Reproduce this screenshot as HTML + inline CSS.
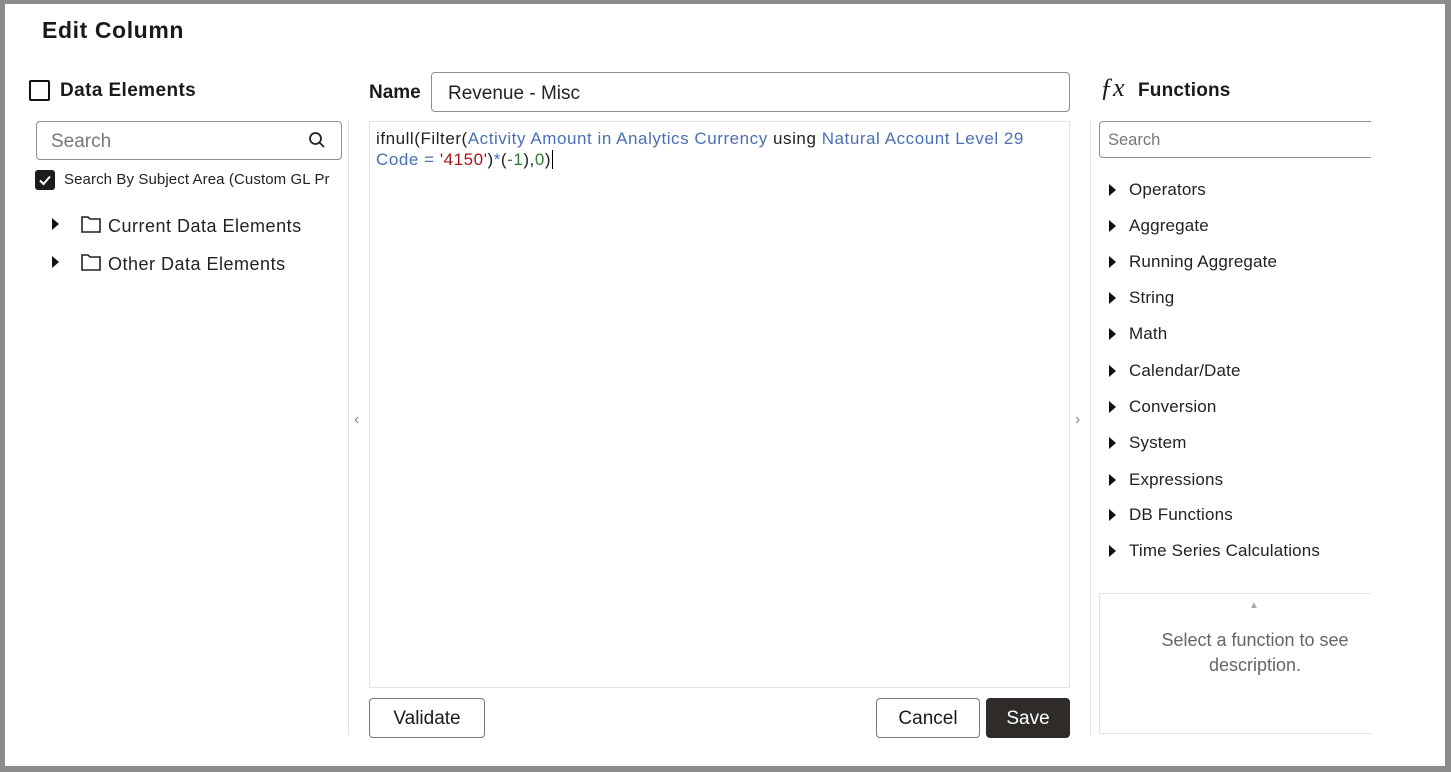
<!DOCTYPE html>
<html><head><meta charset="utf-8"><style>
*{box-sizing:border-box;margin:0;padding:0}
body{width:1451px;height:772px;background:#8c8c8c;font-family:"Liberation Sans",sans-serif;color:#1a1a1a;position:relative;overflow:hidden}
#p{position:absolute;left:5px;top:4px;width:1440px;height:762px;background:#fff}
.a{position:absolute;white-space:nowrap}
.box{position:absolute;border:1px solid #8f8f8f;border-radius:4px;background:#fff}
.tri{position:absolute;width:0;height:0;border-top:6px solid transparent;border-bottom:6px solid transparent;border-left:7px solid #111}
.fl{font-size:17px;color:#222;letter-spacing:.55px}
.btn{position:absolute;border:1px solid #777;border-radius:4px;background:#fff;font-size:19px;display:flex;align-items:center;justify-content:center;padding-top:2px}
</style></head><body><div id="p"></div>
<div class="a" style="left:42px;top:17px;font-size:23px;font-weight:bold;letter-spacing:.6px">Edit Column</div>

<div class="a" style="left:29px;top:80px;width:21px;height:21px;border:2px solid #111;border-radius:2px"></div>
<div class="a" style="left:60px;top:80px;font-size:19px;font-weight:bold;letter-spacing:.4px">Data Elements</div>
<div class="box" style="left:36px;top:121px;width:306px;height:39px"></div>
<div class="a" style="left:51px;top:131px;font-size:19px;color:#777">Search</div>
<svg class="a" style="left:307px;top:130px" width="20" height="20" viewBox="0 0 20 20"><circle cx="8.5" cy="8.5" r="5.5" fill="none" stroke="#222" stroke-width="1.8"/><path d="M12.5 12.5L17 17" stroke="#222" stroke-width="1.8"/></svg>
<svg class="a" style="left:35px;top:170px" width="20" height="20" viewBox="0 0 20 20"><rect width="20" height="20" rx="3" fill="#1c1c1c"/><path d="M5 10.5l3.5 3.5L15 6.5" fill="none" stroke="#fff" stroke-width="2"/></svg>
<div class="a" style="left:64px;top:171px;font-size:15px;color:#222;letter-spacing:.1px">Search By Subject Area (Custom GL Pr</div>
<div class="tri" style="left:52px;top:218px"></div>
<svg class="a" style="left:81px;top:215px" width="20" height="18" viewBox="0 0 20 18"><path d="M1 2h6l2 2h10v13H1z" fill="none" stroke="#222" stroke-width="1.6"/></svg>
<div class="a" style="left:108px;top:216px;font-size:18px;color:#222;letter-spacing:.5px">Current Data Elements</div>
<div class="tri" style="left:52px;top:256px"></div>
<svg class="a" style="left:81px;top:253px" width="20" height="18" viewBox="0 0 20 18"><path d="M1 2h6l2 2h10v13H1z" fill="none" stroke="#222" stroke-width="1.6"/></svg>
<div class="a" style="left:108px;top:254px;font-size:18px;color:#222;letter-spacing:.5px">Other Data Elements</div>

<div class="a" style="left:348px;top:120px;width:1px;height:615px;background:#dde3ea"></div>
<div class="a" style="left:354px;top:411px;font-size:16px;color:#888">‹</div>

<div class="a" style="left:369px;top:82px;font-size:19px;font-weight:bold">Name</div>
<div class="box" style="left:431px;top:72px;width:639px;height:40px"></div>
<div class="a" style="left:448px;top:83px;font-size:19px;color:#222">Revenue - Misc</div>
<div class="a" style="left:369px;top:121px;width:701px;height:567px;border:1px solid #dde3ea"></div>
<div class="a fl" style="left:376px;top:129px">ifnull(Filter(<span style="color:#4a6fb5">Activity Amount in Analytics Currency</span> using <span style="color:#4a6fb5">Natural Account Level 29</span></div>
<div class="a fl" style="left:376px;top:150px"><span style="color:#4a6fb5">Code = </span><span style="color:#a31515">'4150'</span>)<span style="color:#4a6fb5">*</span>(<span style="color:#2e7d32">-1</span>),<span style="color:#2e7d32">0</span>)<span style="border-left:1.5px solid #000;margin-left:1px"></span></div>
<div class="btn" style="left:369px;top:698px;width:116px;height:40px">Validate</div>
<div class="btn" style="left:876px;top:698px;width:104px;height:40px">Cancel</div>
<div class="btn" style="left:986px;top:698px;width:84px;height:40px;background:#2e2b28;border-color:#2e2b28;color:#fff">Save</div>

<div class="a" style="left:1090px;top:120px;width:1px;height:615px;background:#dde3ea"></div>
<div class="a" style="left:1075px;top:411px;font-size:16px;color:#888">›</div>

<div class="a" style="left:1100px;top:73px;font-size:26px;font-style:italic;font-family:'Liberation Serif',serif">ƒx</div>
<div class="a" style="left:1138px;top:80px;font-size:19px;font-weight:bold;letter-spacing:.2px">Functions</div>
<div class="a" style="left:1099px;top:121px;width:272px;height:37px;border:1px solid #8f8f8f;border-right:none;border-radius:4px 0 0 4px"></div>
<div class="a" style="left:1108px;top:131px;font-size:16.5px;color:#777">Search</div>
<div id="fl"></div>
<div class="a" style="left:1099px;top:593px;width:272px;height:141px;border:1px solid #e0e4e8;border-right:none"></div>
<div class="a" style="left:1249px;top:600px;font-size:10px;color:#aaa">▲</div>
<div class="a" style="left:1099px;top:628px;width:312px;text-align:center;font-size:18px;color:#666;line-height:25px;white-space:normal">Select a function to see<br>description.</div>
<script>
var n=["Operators","Aggregate","Running Aggregate","String","Math","Calendar/Date","Conversion","System","Expressions","DB Functions","Time Series Calculations"],y=[190,226,262,298,334,371,407,443,480,515,551],h="";
n.forEach(function(t,i){h+='<div class="tri" style="left:1109px;top:'+(y[i]-6)+'px"></div><div class="a" style="left:1129px;top:'+(y[i]-10)+'px;font-size:17px;color:#222;letter-spacing:.15px">'+t+'</div>'});
document.getElementById("fl").innerHTML=h;
</script>
</body></html>
